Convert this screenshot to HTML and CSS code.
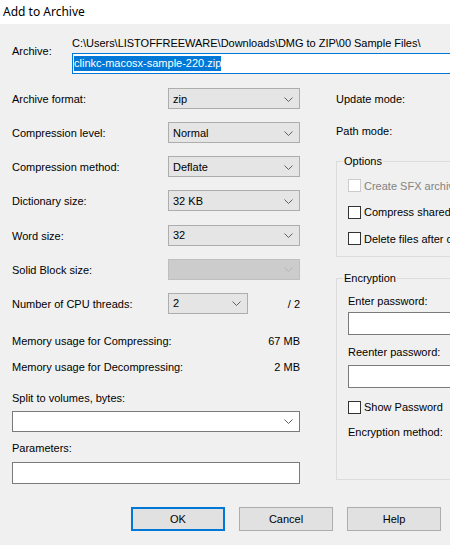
FILE: index.html
```html
<!DOCTYPE html>
<html>
<head>
<meta charset="utf-8">
<link rel="stylesheet" href="styles.css">
</head>
<body>
<div class="titlebar">Add to Archive</div>
<div class="dialog">
  <div class="archive">
    <div class="arch-label">Archive:</div>
    <div class="arch-fields">
      <div class="path">C:\Users\LISTOFFREEWARE\Downloads\DMG to ZIP\00 Sample Files\</div>
      <div class="arch-input"><span class="sel">clinkc-macosx-sample-220.zip</span></div>
    </div>
  </div>
  <div class="cols">
    <div class="left">
      <div class="rows">
        <div class="row"><span class="lbl">Archive format:</span><div class="combo"><span>zip</span><svg class="chev" width="9" height="5" viewBox="0 0 9 5"><polyline points="0.5,0.5 4.5,4.5 8.5,0.5"/></svg></div></div>
        <div class="row"><span class="lbl">Compression level:</span><div class="combo"><span>Normal</span><svg class="chev" width="9" height="5" viewBox="0 0 9 5"><polyline points="0.5,0.5 4.5,4.5 8.5,0.5"/></svg></div></div>
        <div class="row"><span class="lbl">Compression method:</span><div class="combo"><span>Deflate</span><svg class="chev" width="9" height="5" viewBox="0 0 9 5"><polyline points="0.5,0.5 4.5,4.5 8.5,0.5"/></svg></div></div>
        <div class="row"><span class="lbl">Dictionary size:</span><div class="combo"><span>32 KB</span><svg class="chev" width="9" height="5" viewBox="0 0 9 5"><polyline points="0.5,0.5 4.5,4.5 8.5,0.5"/></svg></div></div>
        <div class="row"><span class="lbl">Word size:</span><div class="combo"><span>32</span><svg class="chev" width="9" height="5" viewBox="0 0 9 5"><polyline points="0.5,0.5 4.5,4.5 8.5,0.5"/></svg></div></div>
        <div class="row"><span class="lbl">Solid Block size:</span><div class="combo disabled"><span></span><svg class="chev" width="9" height="5" viewBox="0 0 9 5"><polyline points="0.5,0.5 4.5,4.5 8.5,0.5"/></svg></div></div>
        <div class="row"><span class="lbl">Number of CPU threads:</span><div class="combo small"><span>2</span><svg class="chev" width="9" height="5" viewBox="0 0 9 5"><polyline points="0.5,0.5 4.5,4.5 8.5,0.5"/></svg></div><span class="of">/ 2</span></div>
      </div>
      <div class="mem first"><span>Memory usage for Compressing:</span><span>67 MB</span></div>
      <div class="mem"><span>Memory usage for Decompressing:</span><span>2 MB</span></div>
      <div class="split-lbl">Split to volumes, bytes:</div>
      <div class="combo white"><span></span><svg class="chev" width="9" height="5" viewBox="0 0 9 5"><polyline points="0.5,0.5 4.5,4.5 8.5,0.5"/></svg></div>
      <div class="param-lbl">Parameters:</div>
      <div class="edit param"></div>
    </div>
    <div class="right">
      <div class="rlbl update">Update mode:</div>
      <div class="rlbl pathmode">Path mode:</div>
      <fieldset class="group options">
        <legend>Options</legend>
        <div class="check disabled"><span class="box"></span><span>Create SFX archive</span></div>
        <div class="check"><span class="box"></span><span>Compress shared files</span></div>
        <div class="check"><span class="box"></span><span>Delete files after compression</span></div>
      </fieldset>
      <fieldset class="group encryption">
        <legend>Encryption</legend>
        <div class="elbl">Enter password:</div>
        <div class="edit pw"></div>
        <div class="elbl second">Reenter password:</div>
        <div class="edit pw pw2"></div>
        <div class="check show"><span class="box"></span><span>Show Password</span></div>
        <div class="elbl method">Encryption method:</div>
      </fieldset>
    </div>
  </div>
  <div class="buttons">
    <div class="btn default">OK</div>
    <div class="btn">Cancel</div>
    <div class="btn">Help</div>
  </div>
</div>
</body>
</html>
```
FILE: styles.css
```css
html, body {
  margin: 0;
  padding: 0;
  width: 450px;
  height: 545px;
  overflow: hidden;
  background: #f0f0f0;
}
body {
  font-family: "Liberation Sans", Arial, sans-serif;
  font-size: 11px;
  line-height: 13px;
  color: #000;
}
.titlebar {
  height: 24px;
  background: #fff;
  font-family: "Noto Sans", "Open Sans", sans-serif;
  font-size: 12px;
  line-height: 24px;
  padding-left: 3px;
  color: #000;
}
.dialog {
  padding-left: 12px;
  width: 600px;
}
.archive {
  display: flex;
  padding-top: 13px;
}
.arch-label {
  width: 60px;
  padding-top: 8px;
}
.arch-fields {
  flex: 1;
}
.path {
  white-space: nowrap;
  letter-spacing: -0.02px;
}
.arch-input {
  margin-top: 3px;
  height: 21px;
  box-sizing: border-box;
  border: 1px solid #0078d7;
  background: #fff;
  padding: 2px 1px;
}
.sel {
  display: inline-block;
  background: #0078d7;
  color: #fff;
  line-height: 15px;
}
.cols {
  display: flex;
  margin-top: 14px;
  gap: 36px;
}
.left {
  width: 288px;
  flex: none;
}
.rows {
  display: flex;
  flex-direction: column;
  gap: 13.17px;
}
.row {
  display: flex;
  align-items: center;
  height: 21px;
}
.lbl {
  width: 156px;
  padding-top: 2px;
}
.combo {
  width: 132px;
  height: 21px;
  box-sizing: border-box;
  border: 1px solid #adadad;
  background: #e5e5e5;
  display: flex;
  align-items: center;
  justify-content: space-between;
  padding: 1px 6px 0 4px;
}
.combo.small {
  width: 80px;
}
.combo.disabled {
  background: #cccccc;
  border-color: #bfbfbf;
}
.combo.disabled .chev polyline {
  stroke: #b3b3b3;
}
.combo.white {
  width: 288px;
  background: #fff;
  border-color: #7a7a7a;
  margin-top: 5.5px;
}
.chev polyline {
  fill: none;
  stroke: #606060;
  stroke-width: 1;
}
.of {
  margin-left: auto;
  padding-top: 2px;
}
.mem {
  display: flex;
  justify-content: space-between;
  margin-top: 13px;
}
.mem.first {
  margin-top: 21.5px;
}
.split-lbl {
  margin-top: 18px;
}
.param-lbl {
  margin-top: 10.5px;
}
.edit {
  height: 22px;
  box-sizing: border-box;
  border: 1px solid #7a7a7a;
  background: #fff;
}
.edit.param {
  margin-top: 6.5px;
}
.right {
  width: 200px;
  flex: none;
}
.rlbl.update {
  padding-top: 4.5px;
}
.rlbl.pathmode {
  margin-top: 19px;
}
.group {
  margin: 0;
  border: 1px solid #dcdcdc;
  min-width: 0;
}
.group legend {
  padding: 0 1px;
  margin-left: -5px;
  line-height: 13px;
}
.options {
  margin-top: 17px;
  padding: 11.5px 0 11px 11px;
}
.check {
  display: flex;
  align-items: center;
  gap: 3px;
  height: 13px;
  white-space: nowrap;
}
.check + .check {
  margin-top: 13.5px;
}
.box {
  width: 13px;
  height: 13px;
  box-sizing: border-box;
  border: 1px solid #333;
  background: #fff;
  flex: none;
}
.check span:last-child {
  padding-top: 1px;
}
.check.disabled {
  color: #838383;
}
.check.disabled .box {
  border-color: #cccccc;
}
.encryption {
  margin-top: 14.5px;
  padding: 10.5px 0 40px 11px;
}
.edit.pw {
  margin-top: 4px;
  height: 23px;
}
.elbl.second {
  margin-top: 10.5px;
}
.edit.pw2 {
  margin-top: 6px;
}
.check.show {
  margin-top: 13px;
}
.elbl.method {
  margin-top: 12px;
}
.buttons {
  display: flex;
  width: 450px;
  justify-content: flex-end;
  gap: 14px;
  margin-top: 23px;
  margin-left: -12px;
  padding-right: 9px;
  box-sizing: border-box;
}
.btn {
  width: 94px;
  height: 24px;
  box-sizing: border-box;
  border: 1px solid #adadad;
  background: #e1e1e1;
  display: flex;
  align-items: center;
  justify-content: center;
  padding-top: 1px;
}
.btn.default {
  border: 2px solid #0078d7;
}
```
